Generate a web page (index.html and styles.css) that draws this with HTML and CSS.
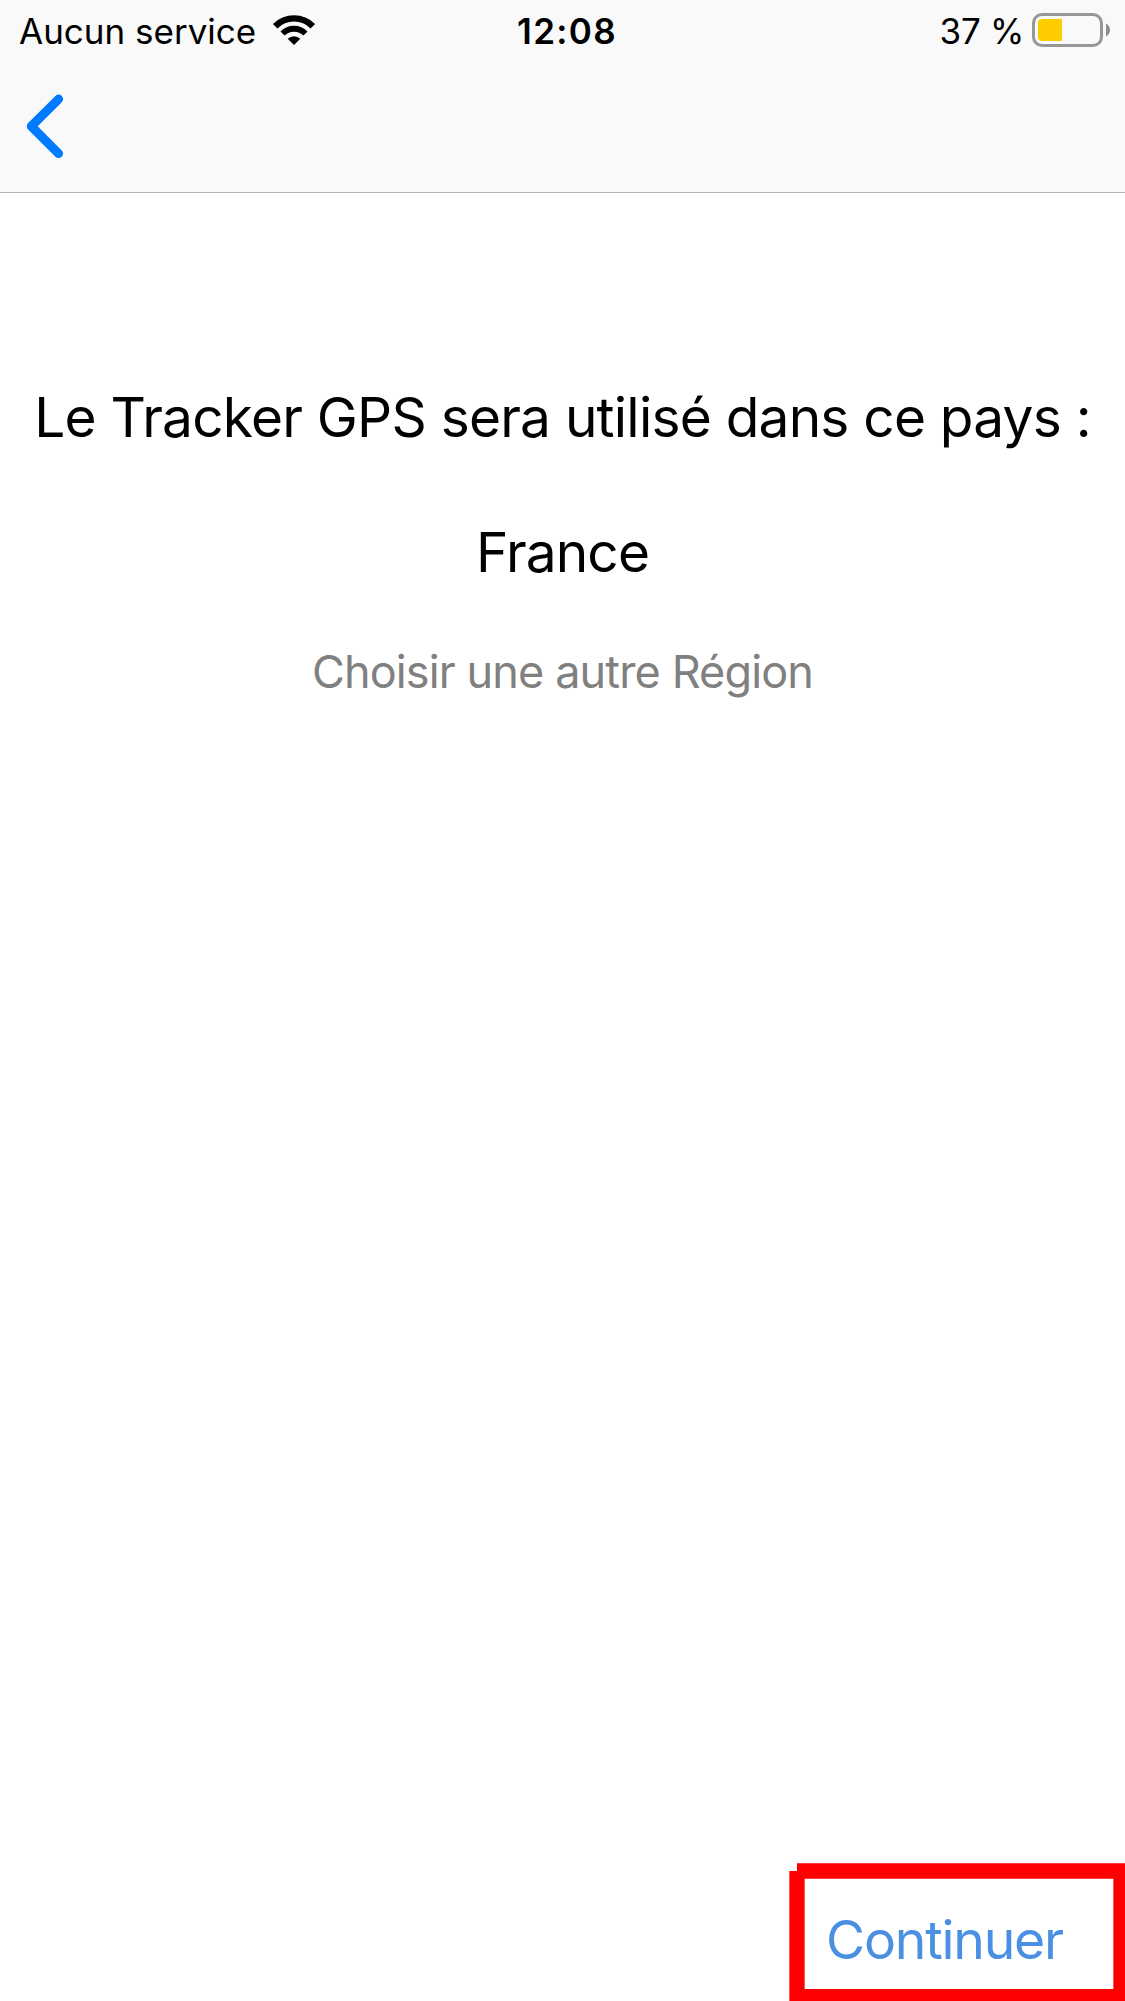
FILE: index.html
```html
<!DOCTYPE html>
<html lang="fr">
<head>
<meta charset="utf-8">
<title>Tracker GPS</title>
<link rel="stylesheet" href="styles.css">
</head>
<body>
<div class="screen">
  <header class="header">
    <div class="status">
      <div class="status-left">
        <span class="carrier">Aucun service</span>
        <svg class="wifi" width="44" height="32" viewBox="0 0 44 32" aria-hidden="true">
          <g fill="none" stroke="#000">
            <path d="M3.2 12.2A26.6 26.6 0 0 1 40.8 12.2" stroke-width="6.4"/>
            <path d="M10.5 19.5A16.3 16.3 0 0 1 33.5 19.5" stroke-width="5.8"/>
          </g>
          <path d="M22 31L15.7 24.7A9 9 0 0 1 28.3 24.7Z"/>
        </svg>
      </div>
      <time class="clock">12:08</time>
      <div class="status-right">
        <span class="percent">37 %</span>
        <svg class="battery" width="78" height="34" viewBox="0 0 78 34" aria-hidden="true">
          <rect x="1.5" y="1.5" width="68" height="31" rx="8.5" fill="none" stroke="#979797" stroke-width="3"/>
          <path d="M30 6H10a4 4 0 0 0-4 4v14a4 4 0 0 0 4 4H30Z" fill="#fc0"/>
          <path d="M74 10.7C79.3 12.5 79.3 21.5 74 23.3Z" fill="#8c8c8c"/>
        </svg>
      </div>
    </div>
    <nav class="nav">
      <svg class="back" width="42" height="68" viewBox="0 0 42 68" role="button" aria-label="Retour">
        <path d="M34.6 7.1L7.3 34.3L34.6 61.6" fill="none" stroke="#007aff" stroke-width="9" stroke-linecap="round" stroke-linejoin="round"/>
      </svg>
    </nav>
  </header>
  <main class="content">
    <h1 class="title">Le Tracker GPS sera utilisé dans ce pays :</h1>
    <p class="country">France</p>
    <a class="other">Choisir une autre Région</a>
  </main>
  <footer class="footer">
    <div class="action">
      <svg class="frame" width="336" height="138" viewBox="0 0 336 138" aria-hidden="true">
        <path d="M8 8H332V133.6H8V8" fill="none" stroke="#f00" stroke-width="15.3"/>
      </svg>
      <a class="continue">Continuer</a>
    </div>
  </footer>
</div>
</body>
</html>
```
FILE: styles.css
```css
* { box-sizing: border-box; }

body {
  margin: 0;
  background: #fff;
  color: #000;
  font-family: Inter, "Liberation Sans", sans-serif;
}

.screen {
  display: flex;
  flex-direction: column;
  height: 2001px;
  overflow: hidden;
}

.header {
  height: 193px;
  background: #f9f9f9;
  border-bottom: 1px solid #b2b2b2;
}

.status {
  display: grid;
  grid-template-columns: 517px 98px 1fr;
  height: 62px;
  font-size: 35px;
  line-height: 62px;
  white-space: nowrap;
}

.status-left {
  display: flex;
  align-items: flex-start;
  padding-left: 19px;
}

.wifi { margin: 14px 0 0 16px; }

.clock {
  font-weight: 600;
  letter-spacing: 1.35px;
}

.status-right {
  display: flex;
  justify-content: flex-end;
  align-items: flex-start;
  padding-right: 15px;
}

.percent { letter-spacing: -0.3px; }

.battery { margin: 13px 0 0 8px; }

.nav { padding: 30px 0 0 24px; }

.back { display: block; }

.content {
  flex: 1;
  display: flex;
  flex-direction: column;
  align-items: center;
  padding-top: 191px;
  text-align: center;
  white-space: nowrap;
}

.title,
.country {
  margin: 0;
  font-size: 55px;
  font-weight: 400;
  line-height: 66px;
}

.title { letter-spacing: -0.785px; }

.country {
  margin-top: 69px;
  letter-spacing: -0.88px;
}

.other {
  margin-top: 60px;
  color: #808080;
  font-size: 45px;
  line-height: 54px;
  letter-spacing: -0.87px;
}

.footer {
  display: flex;
  justify-content: flex-end;
}

.action {
  position: relative;
  width: 336px;
  height: 138px;
  padding: 44px 0 0 37px;
}

.frame {
  position: absolute;
  inset: 0;
}

.continue {
  display: block;
  color: #4a90e2;
  font-size: 53.5px;
  line-height: 65px;
  letter-spacing: -1.2px;
}
```
